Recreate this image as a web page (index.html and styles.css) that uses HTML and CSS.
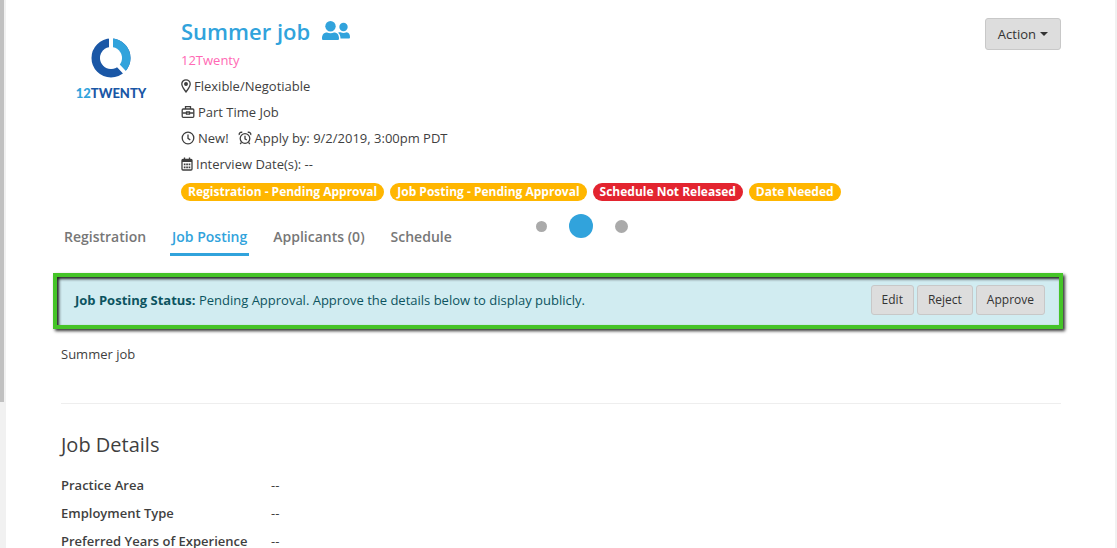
FILE: index.html
```
<!DOCTYPE html>
<html lang="en">
<head>
<meta charset="utf-8">
<title>Summer job</title>
<link rel="stylesheet" href="styles.css">
</head>
<body>
<div class="track"><div class="thumb"></div></div>
<main class="page">
  <header class="header">
    <div class="logo">
      <svg class="logo-mark" viewBox="0 0 40 40" aria-hidden="true">
        <circle cx="20" cy="20" r="15" fill="none" stroke="#1a57a6" stroke-width="9"/>
        <path d="M20 5A15 15 0 0 1 30.600 30.600" fill="none" stroke="#31a3dc" stroke-width="9"/>
        <path d="M20 20V0M20 20L36 37" stroke="#fff" stroke-width="4"/>
        <circle cx="20" cy="20" r="11" fill="#fff"/>
      </svg>
      <div class="logo-text"><span class="logo-num">12</span>TWENTY</div>
    </div>
    <div class="summary">
      <h1 class="title">Summer job
        <svg class="people" viewBox="0 0 28 20" fill="currentColor" aria-hidden="true">
          <circle cx="8.500" cy="5.200" r="5.200"/>
          <path d="M0 17.500c0-4 2-6 5-6 2 1.100 5 1.100 7 0 3 0 5 2 5 6 0 1-.6 1.500-1.500 1.500h-14C.6 19 0 18.500 0 17.500z"/>
          <circle cx="21.500" cy="6" r="4.200"/>
          <path d="M16 11.800c1-.6 1.500-.6 2.500-.6 2 .9 4 .9 6 0 2.500.2 3.500 2 3.500 5 0 .9-.5 1.300-1.300 1.300h-8.200c0-2.500-.8-4.500-2.500-5.700z"/>
        </svg>
      </h1>
      <a class="company line" href="#">12Twenty</a>
      <div class="line">
        <svg class="icon narrow" viewBox="0 0 10 14" aria-hidden="true"><path d="M5 13C3.800 11 .8 8 .8 5a4.200 4.200 0 0 1 8.400 0C9.200 8 6.200 11 5 13z"/><circle class="solid" cx="5" cy="5" r="1.300"/></svg>
        <span>Flexible/Negotiable</span>
      </div>
      <div class="line">
        <svg class="icon" viewBox="0 0 13 14" aria-hidden="true"><rect x=".7" y="4" width="11.600" height="8.300" rx="1"/><path d="M4 4V1.700h5V4M1 8h4M8 8h4M5 7h3v2.200H5z"/></svg>
        <span>Part Time Job</span>
      </div>
      <div class="line">
        <svg class="icon" viewBox="0 0 13 14" aria-hidden="true"><circle cx="6.500" cy="7" r="5.800"/><path d="M6.500 3.500V7.300L8.800 9"/></svg>
        <span>New!</span>
        <svg class="icon alarm" viewBox="0 0 13 14" aria-hidden="true"><circle cx="6.500" cy="7.500" r="4.800"/><path d="M6.500 4.800V7.800L8.300 9M3 11.300L1.700 13M10 11.300L11.300 13M.8 4C.2 2 2 .8 3.800 1.400M12.200 4C12.800 2 11 .8 9.200 1.400"/></svg>
        <span>Apply by: 9/2/2019, 3:00pm PDT</span>
      </div>
      <div class="line">
        <svg class="icon cal" viewBox="0 0 12 14" aria-hidden="true"><rect x="1" y="2.500" width="10" height="10.500" rx="1"/><path d="M3.500 .5V3M8.500 .5V3"/><path class="solid" d="M1 2.500h10v2.500H1zM2.800 6.500h1.700v1.700H2.800zM5.200 6.500h1.700v1.700H5.200zM7.600 6.500h1.700v1.700H7.600zM2.800 9.500h1.700v1.700H2.800zM5.200 9.500h1.700v1.700H5.200zM7.600 9.500h1.700v1.700H7.600z" stroke="none"/></svg>
        <span>Interview Date(s): --</span>
      </div>
      <div class="pills">
        <span class="pill">Registration - Pending Approval</span>
        <span class="pill">Job Posting - Pending Approval</span>
        <span class="pill pill-red">Schedule Not Released</span>
        <span class="pill">Date Needed</span>
      </div>
    </div>
    <button class="btn action" type="button">Action<span class="caret"></span></button>
  </header>

  <nav class="tabs">
    <a class="tab" href="#">Registration</a>
    <a class="tab active" href="#" aria-current="page">Job Posting</a>
    <a class="tab" href="#">Applicants (0)</a>
    <a class="tab" href="#">Schedule</a>
  </nav>

  <section class="status">
    <p class="status-text"><b>Job Posting Status:</b> Pending Approval. Approve the details below to display publicly.</p>
    <div class="buttons">
      <button class="btn" type="button">Edit</button>
      <button class="btn" type="button">Reject</button>
      <button class="btn" type="button">Approve</button>
    </div>
  </section>

  <p class="description">Summer job</p>
  <h2 class="heading">Job Details</h2>
  <dl class="details">
    <dt>Practice Area</dt><dd>--</dd>
    <dt>Employment Type</dt><dd>--</dd>
    <dt>Preferred Years of Experience</dt><dd>--</dd>
  </dl>
  <div class="loader" role="status" aria-label="Loading">
    <span class="dot small"></span><span class="dot big"></span><span class="dot"></span>
  </div>
</main>
</body>
</html>
```
FILE: styles.css
```
* { box-sizing: border-box; }
html { height: 100%; overflow: hidden; }
body {
  margin: 0;
  min-height: 100%;
  display: flex;
  background: #fff;
  color: #3f3f3f;
  font: 13px/26px "Open Sans", sans-serif;
}
h1, h2, p, dl, dd { margin: 0; }
a { text-decoration: none; }

.track { width: 6px; height: 100vh; flex: none; background: #f1f1f1; }
.thumb { width: 4px; height: 402px; background: #c1c1c1; }

.page {
  position: relative;
  flex: 1;
  min-width: 0;
  height: 100vh;
  overflow: hidden;
  padding: 15px 54px 0 55px;
  border-right: 2px solid #f1f1f1;
}

.header { display: flex; align-items: flex-start; }
.logo {
  width: 100px;
  margin-right: 20px;
  padding-top: 23px;
  display: flex;
  flex-direction: column;
  align-items: center;
}
.logo-mark { width: 40px; height: 40px; }
.logo-text {
  margin-top: 6px;
  color: #1a57a6;
  font: 900 13px/18px Lato, sans-serif;
}
.logo-num { color: #31a3dc; }

.summary { flex: 1; min-width: 0; }
.title {
  display: flex;
  align-items: center;
  gap: 12px;
  color: #31a3dc;
  font-size: 22px;
  font-weight: 600;
  line-height: 32px;
}
.people { width: 28px; height: 20px; }
.line { display: flex; align-items: center; gap: 3px; height: 26px; }
.company { color: #ff69b4; }
.icon {
  width: 14px;
  height: 14px;
  fill: none;
  stroke: #3f3f3f;
  stroke-width: 1.3;
}
.icon.narrow { width: 10px; }
.icon.cal { width: 12px; }
.icon.alarm { margin-left: 6px; }
.icon .solid { fill: #3f3f3f; }

.pills { display: flex; gap: 6px; padding-top: 6px; }
.pill {
  padding: 0 7px;
  border-radius: 9px;
  background: #ffb600;
  color: #fff;
  font-size: 12px;
  font-weight: 700;
  line-height: 18px;
}
.pill-red { background: #e3242f; }

.btn {
  height: 30px;
  padding: 0 10px;
  border: 1px solid #c8c8c8;
  border-radius: 3px;
  background: #ddd;
  color: #333;
  font: 12px/18px "Open Sans", sans-serif;
}
.action {
  display: flex;
  align-items: center;
  gap: 4px;
  height: 32px;
  margin-top: 3px;
  padding: 0 12px;
  font-size: 13px;
}
.caret { border: 4px solid transparent; border-top-color: #333; border-bottom: 0; }

.tabs { display: flex; gap: 22px; margin-top: 23px; padding-left: 1px; }
.tab {
  padding: 0 2px 3px;
  border-bottom: 3px solid transparent;
  color: #777;
  font-size: 14px;
  font-weight: 600;
}
.tab.active { border-color: #31a3dc; color: #31a3dc; }

.status {
  display: flex;
  align-items: center;
  justify-content: space-between;
  gap: 12px;
  min-height: 56px;
  margin: 17px -2px 0 -8px;
  padding: 5px 14px 8px 18px;
  border: 4px solid #45c428;
  background: #d1ecf1;
  color: #0c5460;
  box-shadow: 2px 2px 3px #333, inset 2px 2px 3px #222;
}
.status-text { font-size: 13px; }
.buttons { display: flex; gap: 3px; }

.description {
  padding: 12px 0 36px;
  border-bottom: 1px solid #eee;
}
.heading {
  margin-top: 26px;
  font-size: 20px;
  font-weight: 400;
  line-height: 30px;
}
.details {
  display: grid;
  grid-template-columns: 210px 1fr;
  margin-top: 11px;
  line-height: 28px;
}
.details dt { font-weight: 600; }

.loader {
  position: absolute;
  top: 214px;
  left: 50%;
  display: flex;
  align-items: center;
  transform: translateX(-25px);
}
.dot { width: 13px; height: 13px; border-radius: 50%; background: #aaa; }
.small { width: 11px; height: 11px; }
.big { width: 24px; height: 24px; margin: 0 22px; background: #31a3dc; }
```
